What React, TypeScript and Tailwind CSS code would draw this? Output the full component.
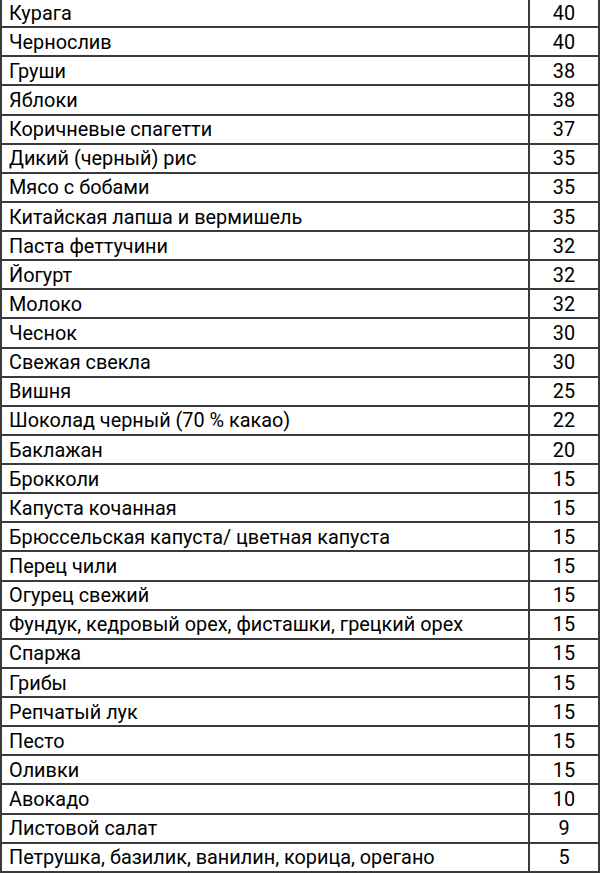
const rows: [string, string][] = [
  ['Курага', '40'],
  ['Чернослив', '40'],
  ['Груши', '38'],
  ['Яблоки', '38'],
  ['Коричневые спагетти', '37'],
  ['Дикий (черный) рис', '35'],
  ['Мясо с бобами', '35'],
  ['Китайская лапша и вермишель', '35'],
  ['Паста феттучини', '32'],
  ['Йогурт', '32'],
  ['Молоко', '32'],
  ['Чеснок', '30'],
  ['Свежая свекла', '30'],
  ['Вишня', '25'],
  ['Шоколад черный (70 % какао)', '22'],
  ['Баклажан', '20'],
  ['Брокколи', '15'],
  ['Капуста кочанная', '15'],
  ['Брюссельская капуста/ цветная капуста', '15'],
  ['Перец чили', '15'],
  ['Огурец свежий', '15'],
  ['Фундук, кедровый орех, фисташки, грецкий орех', '15'],
  ['Спаржа', '15'],
  ['Грибы', '15'],
  ['Репчатый лук', '15'],
  ['Песто', '15'],
  ['Оливки', '15'],
  ['Авокадо', '10'],
  ['Листовой салат', '9'],
  ['Петрушка, базилик, ванилин, корица, орегано', '5'],
];

export default function App() {
  return (
    <div className="w-[600px] h-[873px] overflow-hidden bg-white text-black font-['Roboto',sans-serif]">
      {rows.map(([name, gi], i) => (
        <div
          key={i}
          className="grid grid-cols-[1fr_70px] h-[29.14px] border-b-2 border-[#3a3a3a] first:-mt-[1px]"
        >
          <div className="flex items-center pl-[7px] pt-[2px] border-l-2 border-r-2 border-[#3a3a3a] text-[19.85px] leading-none">
            {name}
          </div>
          <div className="flex items-center justify-center pt-[2px] border-r-2 border-[#3a3a3a] text-[19.85px] leading-none">
            {gi}
          </div>
        </div>
      ))}
    </div>
  );
}
